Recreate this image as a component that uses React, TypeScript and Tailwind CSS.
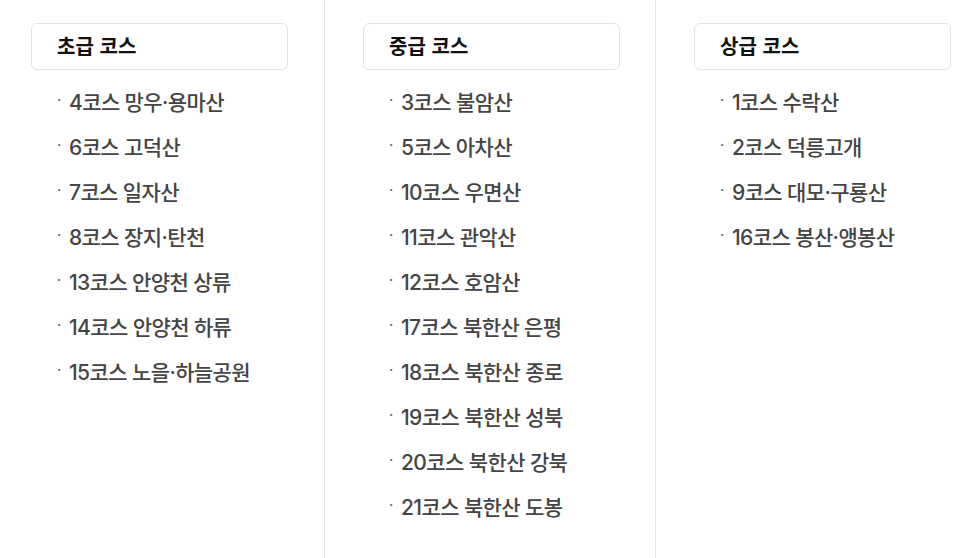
import React from "react";

const columns = [
  {
    title: "초급 코스",
    items: [
      "4코스 망우·용마산",
      "6코스 고덕산",
      "7코스 일자산",
      "8코스 장지·탄천",
      "13코스 안양천 상류",
      "14코스 안양천 하류",
      "15코스 노을·하늘공원",
    ],
  },
  {
    title: "중급 코스",
    items: [
      "3코스 불암산",
      "5코스 아차산",
      "10코스 우면산",
      "11코스 관악산",
      "12코스 호암산",
      "17코스 북한산 은평",
      "18코스 북한산 종로",
      "19코스 북한산 성북",
      "20코스 북한산 강북",
      "21코스 북한산 도봉",
    ],
  },
  {
    title: "상급 코스",
    items: ["1코스 수락산", "2코스 덕릉고개", "9코스 대모·구룡산", "16코스 봉산·앵봉산"],
  },
];

function Column({ title, items, cls }: { title: string; items: string[]; cls: string }) {
  return (
    <div className={cls}>
      <div className="mt-[23px] h-[47px] w-[257px] rounded-[6px] border border-[#e3e3e3] flex items-center pl-[25px]">
        <span className="text-[20px] font-semibold text-[#111] tracking-[0.2px]">{title}</span>
      </div>
      <ul className="mt-[10px] pl-[26px]">
        {items.map((t) => (
          <li key={t} className="h-[45px] flex items-center text-[21px] font-medium text-[#444] tracking-[-0.6px]">
            <span className="w-[12px] text-[#666] text-[14px] -mt-[6px]">·</span>
            <span>{t}</span>
          </li>
        ))}
      </ul>
    </div>
  );
}

export default function App() {
  return (
    <div
      className="w-[972px] h-[558px] bg-white flex overflow-hidden"
      style={{ fontFamily: 'Inter, "Noto Sans CJK KR", sans-serif' }}
    >
      <Column title={columns[0].title} items={columns[0].items} cls="w-[324px] pl-[31px] h-full" />
      <Column title={columns[1].title} items={columns[1].items} cls="w-[331px] pl-[38px] h-full border-l border-[#e5e5e5]" />
      <Column title={columns[2].title} items={columns[2].items} cls="flex-1 pl-[38px] h-full border-l border-[#e5e5e5]" />
    </div>
  );
}
